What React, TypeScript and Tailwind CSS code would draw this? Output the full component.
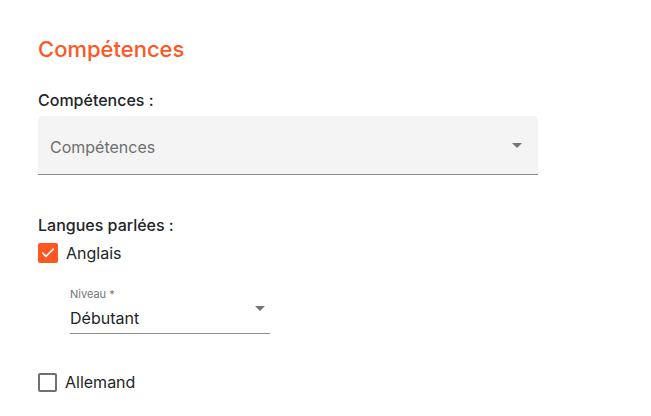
import { Check } from 'lucide-react'

function Arrow() {
  return (
    <svg width="10" height="5" viewBox="0 0 10 5" className="shrink-0">
      <path d="M0 0 L10 0 L5 5 Z" fill="#757575" />
    </svg>
  )
}

export default function App() {
  return (
    <div className="min-h-screen bg-white text-[#212529]" style={{ fontFamily: 'Inter, "Noto Sans", sans-serif' }}>
      <div className="pl-[38px] pt-[37px] w-[538px]">
        {/* Section title */}
        <h2 className="text-[22px] leading-[24px] font-medium text-[#ff5722]">Compétences</h2>

        {/* Compétences select */}
        <div className="mt-[29px] text-[16px] leading-[20px] font-medium">Compétences :</div>
        <div className="mt-[6px] h-[59px] w-[500px] bg-[#f4f4f4] rounded-t-[4px] border-b border-[#8c8c8c] flex items-center justify-between pl-[12px] pr-[16px]">
          <span className="text-[16px] text-[#6e6e6e] mt-[3px]">Compétences</span>
          <Arrow />
        </div>

        {/* Langues */}
        <div className="mt-[40px] text-[16px] leading-[20px] font-medium">Langues parlées :</div>
        <label className="mt-[6px] flex items-center gap-[8px] h-[24px]">
          <span className="w-[20px] h-[20px] rounded-[2px] bg-[#ff5722] flex items-center justify-center">
            <Check className="w-[16px] h-[16px] text-white" strokeWidth={2.5} />
          </span>
          <span className="text-[16px]">Anglais</span>
        </label>

        <div className="ml-[32px] mt-[22px] w-[200px] border-b border-[#8c8c8c]">
          <div className="text-[11px] leading-[14px] text-[#757575]">Niveau *</div>
          <div className="flex items-start justify-between pr-[5px] h-[32px]">
            <span className="text-[16px] leading-[20px] pt-[7px]">Débutant</span>
            <span className="mt-[5px]">
              <Arrow />
            </span>
          </div>
        </div>

        <label className="mt-[36px] flex items-center gap-[8px] h-[24px]">
          <span className="w-[19px] h-[19px] rounded-[2px] border-2 border-[#707070]" />
          <span className="text-[16px]">Allemand</span>
        </label>
      </div>
    </div>
  )
}
